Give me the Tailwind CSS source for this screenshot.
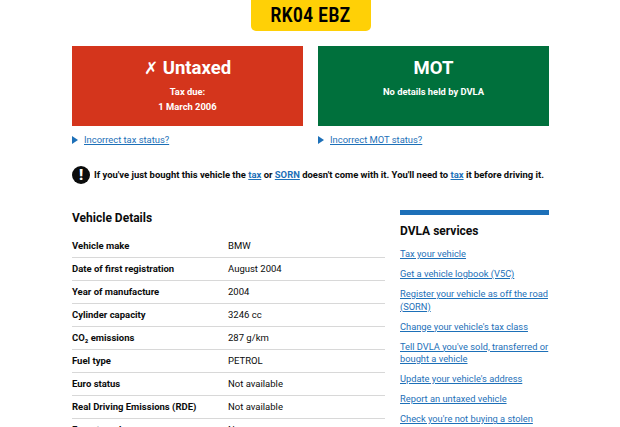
<!DOCTYPE html>
<html lang="en">
<head>
<meta charset="UTF-8">
<meta name="viewport" content="width=device-width, initial-scale=1.0">
<script src="https://cdn.jsdelivr.net/npm/@tailwindcss/browser@4"></script>
<title>Vehicle enquiry</title>
</head>
<body class="bg-white h-[427px] overflow-hidden font-['Roboto',sans-serif] text-[#0b0c0c]">
<div class="w-[477px] ml-[72px]">
    <!-- Number plate -->
    <div class="flex justify-center">
        <div class="w-[120px] h-[31px] bg-[#ffd006] rounded-b-[5px] flex items-center justify-center font-bold text-black">
            <span class="text-[17px] tracking-[0.5px] scale-y-[1.2]">RK04 EBZ</span>
        </div>
    </div>

    <!-- Status panels -->
    <div class="grid grid-cols-2 gap-[15px] mt-[15px]">
        <div>
            <div class="h-[80px] bg-[#d4351c] text-white text-center pt-[10px]">
                <div class="text-[18.5px] leading-[24px] font-bold"><span class="font-['DejaVu_Sans',sans-serif] text-[17px]">✗</span> Untaxed</div>
                <div class="text-[9.4px] leading-[15px] font-bold mt-[4px]">Tax due:<br>1 March 2006</div>
            </div>
            <div class="flex items-center gap-[6px] mt-[7px] text-[9.4px] leading-[13px] text-[#1d70b8]">
                <span class="w-0 h-0 border-y-[4px] border-y-transparent border-l-[6px] border-l-[#1d70b8]"></span>
                <a href="#" class="underline">Incorrect tax status?</a>
            </div>
        </div>
        <div>
            <div class="h-[80px] bg-[#00703c] text-white text-center pt-[10px]">
                <div class="text-[18.5px] leading-[24px] font-bold">MOT</div>
                <div class="text-[9.4px] leading-[15px] font-bold mt-[4px]">No details held by DVLA</div>
            </div>
            <div class="flex items-center gap-[6px] mt-[7px] text-[9.4px] leading-[13px] text-[#1d70b8]">
                <span class="w-0 h-0 border-y-[4px] border-y-transparent border-l-[6px] border-l-[#1d70b8]"></span>
                <a href="#" class="underline">Incorrect MOT status?</a>
            </div>
        </div>
    </div>

    <!-- Warning -->
    <div class="flex items-center gap-[4px] mt-[20px]">
        <div class="w-[18px] h-[18px] shrink-0 rounded-full bg-[#0b0c0c] text-white flex items-center justify-center text-[15px] font-black">!</div>
        <p class="text-[9.45px] font-bold whitespace-nowrap">If you've just bought this vehicle the <a href="#" class="underline text-[#1d70b8]">tax</a> or <a href="#" class="underline text-[#1d70b8]">SORN</a> doesn't come with it. You'll need to <a href="#" class="underline text-[#1d70b8]">tax</a> it before driving it.</p>
    </div>

    <div class="flex justify-between items-start mt-[24px]">
        <!-- Vehicle details -->
        <div class="w-[313px]">
            <h2 class="text-[12px] leading-[16px] font-bold mt-[2px] mb-[9px]">Vehicle Details</h2>
            <dl class="text-[9.5px]">
                <div class="flex h-[23px] items-center border-b border-[#d8d8d8]"><dt class="w-[156px] font-bold">Vehicle make</dt><dd>BMW</dd></div>
                <div class="flex h-[23px] items-center border-b border-[#d8d8d8]"><dt class="w-[156px] font-bold">Date of first registration</dt><dd>August 2004</dd></div>
                <div class="flex h-[23px] items-center border-b border-[#d8d8d8]"><dt class="w-[156px] font-bold">Year of manufacture</dt><dd>2004</dd></div>
                <div class="flex h-[23px] items-center border-b border-[#d8d8d8]"><dt class="w-[156px] font-bold">Cylinder capacity</dt><dd>3246 cc</dd></div>
                <div class="flex h-[23px] items-center border-b border-[#d8d8d8]"><dt class="w-[156px] font-bold">CO₂ emissions</dt><dd>287 g/km</dd></div>
                <div class="flex h-[23px] items-center border-b border-[#d8d8d8]"><dt class="w-[156px] font-bold">Fuel type</dt><dd>PETROL</dd></div>
                <div class="flex h-[23px] items-center border-b border-[#d8d8d8]"><dt class="w-[156px] font-bold">Euro status</dt><dd>Not available</dd></div>
                <div class="flex h-[23px] items-center border-b border-[#d8d8d8]"><dt class="w-[156px] font-bold">Real Driving Emissions (RDE)</dt><dd>Not available</dd></div>
                <div class="flex h-[23px] items-center border-b border-[#d8d8d8]"><dt class="w-[156px] font-bold">Export marker</dt><dd>No</dd></div>
            </dl>
        </div>

        <!-- DVLA services -->
        <aside class="w-[149px] mt-[2px] border-t-[5px] border-[#1d70b8]">
            <h3 class="text-[12px] leading-[16px] font-bold mt-[8px] mb-[9px]">DVLA services</h3>
            <ul class="text-[9.3px] leading-[12.5px] text-[#1d70b8] flex flex-col gap-[7.5px]">
                <li><a href="#" class="underline">Tax your vehicle</a></li>
                <li><a href="#" class="underline">Get a vehicle logbook (V5C)</a></li>
                <li><a href="#" class="underline">Register your vehicle as off the road (SORN)</a></li>
                <li><a href="#" class="underline">Change your vehicle's tax class</a></li>
                <li><a href="#" class="underline">Tell DVLA you've sold, transferred or bought a vehicle</a></li>
                <li><a href="#" class="underline">Update your vehicle's address</a></li>
                <li><a href="#" class="underline">Report an untaxed vehicle</a></li>
                <li><a href="#" class="underline">Check you're not buying a stolen vehicle</a></li>
            </ul>
        </aside>
    </div>
</div>
</body>
</html>
